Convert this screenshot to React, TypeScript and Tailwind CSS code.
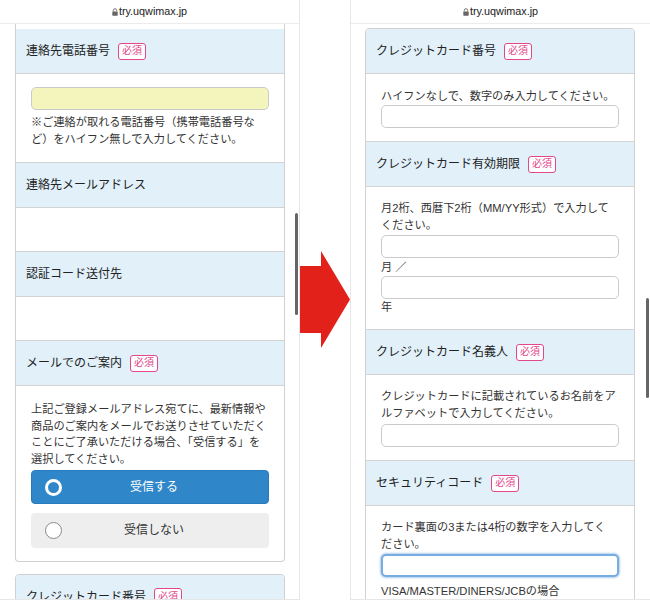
import React from "react";

function Lock() {
  return (
    <svg width="6" height="8" viewBox="0 0 6 8" className="mr-[1px]">
      <path d="M1.3 3.5V2.4a1.7 1.7 0 0 1 3.4 0v1.1" fill="none" stroke="#666" strokeWidth="0.9" />
      <rect x="0.3" y="3.4" width="5.4" height="4.3" rx="0.6" fill="#666" />
    </svg>
  );
}

function TopBar() {
  return (
    <div className="flex h-[24px] items-center justify-center border-b border-[#ececec] bg-white">
      <Lock />
      <span className="text-[10.8px] text-[#1a1a1a] font-['Liberation_Sans',sans-serif]">try.uqwimax.jp</span>
    </div>
  );
}

function Badge() {
  return (
    <span className="ml-[8px] inline-flex h-[17px] w-[28px] items-center justify-center rounded-[3px] border border-[#e2468b] bg-white text-[10px] leading-none text-[#e2468b]">
      必須
    </span>
  );
}

function Header({ title, req }: { title: string; req?: boolean }) {
  return (
    <div className="flex h-[45px] items-center border-b border-[#d3d3d3] bg-[#e1f0f9] pl-[10px] text-[12px] text-[#222]">
      <span>{title}</span>
      {req && <Badge />}
    </div>
  );
}

function Input({ yellow, focus, className = "" }: { yellow?: boolean; focus?: boolean; className?: string }) {
  if (focus) {
    return (
      <div
        className={`h-[23px] rounded-[5px] border-2 border-[#78ace0] bg-white shadow-[0_0_2px_1px_rgba(120,172,224,0.6)] ${className}`}
      />
    );
  }
  return (
    <div
      className={`h-[23px] rounded-[5px] border border-[#cacaca] ${yellow ? "bg-[#f3f5bd]" : "bg-white"} ${className}`}
    />
  );
}

function LeftPhone() {
  return (
    <div className="relative h-[600px] w-[300px] shrink-0 overflow-hidden border-r border-b border-[#e6e6e6] bg-white">
      <TopBar />
      <div className="ml-[15px] w-[270px] overflow-hidden rounded-b-[4px] border-x border-b border-[#d0d0d0] bg-white">
        <div className="h-[5px] bg-white" />
        <Header title="連絡先電話番号" req />
        <div className="border-b border-[#d3d3d3] px-[15px] pt-[13px] pb-[14px]">
          <Input yellow />
          <p className="mt-[4px] text-[11.2px] leading-[17px] text-[#333]">
            ※ご連絡が取れる電話番号（携帯電話番号な
            <br />
            ど）をハイフン無しで入力してください。
          </p>
        </div>
        <Header title="連絡先メールアドレス" />
        <div className="h-[44px] border-b border-[#d3d3d3]" />
        <Header title="認証コード送付先" />
        <div className="h-[44px] border-b border-[#d3d3d3]" />
        <Header title="メールでのご案内" req />
        <div className="px-[15px] pt-[15px] pb-[13px]">
          <p className="text-[11.2px] leading-[16.7px] text-[#333]">
            上記ご登録メールアドレス宛てに、最新情報や
            <br />
            商品のご案内をメールでお送りさせていただく
            <br />
            ことにご了承いただける場合、「受信する」を
            <br />
            選択してください。
          </p>
          <div className="relative mt-[2px] flex h-[34px] items-center justify-center rounded-[4px] border border-[#2a7bbd] bg-[#2f87c9] pl-[8px] text-[12px] text-white">
            <span className="absolute left-[13px] top-[8px] h-[17px] w-[17px] rounded-full border-[3px] border-white bg-[#2f87c9]" />
            受信する
          </div>
          <div className="relative mt-[9px] flex h-[35px] items-center justify-center rounded-[4px] bg-[#eeeeee] pl-[8px] text-[12px] text-[#333]">
            <span className="absolute left-[14px] top-[9px] h-[17px] w-[17px] rounded-full border-[1.5px] border-[#8a8a8a] bg-white" />
            受信しない
          </div>
        </div>
      </div>
      <div className="mt-[12px] ml-[15px] w-[270px] overflow-hidden rounded-t-[4px] border border-[#d0d0d0]">
        <Header title="クレジットカード番号" req />
      </div>
      <div className="absolute left-[295px] top-[213px] h-[102px] w-[2.5px] rounded-full bg-[#666]" />
    </div>
  );
}

function RightPhone() {
  return (
    <div className="relative h-[600px] w-[300px] shrink-0 overflow-hidden border-l border-b border-[#e6e6e6] bg-white">
      <TopBar />
      <div className="mt-[4px] ml-[14px] w-[270px] overflow-hidden rounded-t-[4px] border border-[#d0d0d0] bg-white">
        <Header title="クレジットカード番号" req />
        <div className="border-b border-[#d3d3d3] px-[15px] pt-[14px] pb-[13px]">
          <p className="text-[11.2px] leading-[17px] text-[#333]">ハイフンなしで、数字のみ入力してください。</p>
          <Input />
        </div>
        <Header title="クレジットカード有効期限" req />
        <div className="border-b border-[#d3d3d3] px-[15px] pt-[13px] pb-[13px]">
          <p className="text-[11.2px] leading-[17px] text-[#333]">
            月2桁、西暦下2桁（MM/YY形式）で入力して
            <br />
            ください。
          </p>
          <Input className="mt-[1px]" />
          <p className="text-[11.2px] leading-[18px] text-[#333]">月 ／</p>
          <Input />
          <p className="text-[11.2px] leading-[17px] text-[#333]">年</p>
        </div>
        <Header title="クレジットカード名義人" req />
        <div className="border-b border-[#d3d3d3] px-[15px] pt-[13px] pb-[13px]">
          <p className="text-[11.2px] leading-[17px] text-[#333]">
            クレジットカードに記載されているお名前をア
            <br />
            ルファベットで入力してください。
          </p>
          <Input className="mt-[2px]" />
        </div>
        <Header title="セキュリティコード" req />
        <div className="px-[15px] pt-[13px]">
          <p className="text-[11.2px] leading-[17px] text-[#333]">
            カード裏面の3または4桁の数字を入力してく
            <br />
            ださい。
          </p>
          <Input focus className="mt-[1px]" />
          <p className="mt-[6px] text-[11.2px] leading-[17px] text-[#333]">VISA/MASTER/DINERS/JCBの場合</p>
        </div>
      </div>
      <div className="absolute left-[295px] top-[298px] h-[100px] w-[2.5px] rounded-full bg-[#666]" />
    </div>
  );
}

export default function App() {
  return (
    <div className="flex h-[600px] w-[650px] bg-white font-['Liberation_Sans','Noto_Sans_CJK_JP',sans-serif]">
      <LeftPhone />
      <div className="flex w-[50px] shrink-0 flex-col">
        <svg width="50" height="97" viewBox="0 0 50 97" className="mt-[251px]">
          <polygon points="0,15 21,15 21,0 50,48.5 21,97 21,82 0,82" fill="#e3211b" />
        </svg>
      </div>
      <RightPhone />
    </div>
  );
}
